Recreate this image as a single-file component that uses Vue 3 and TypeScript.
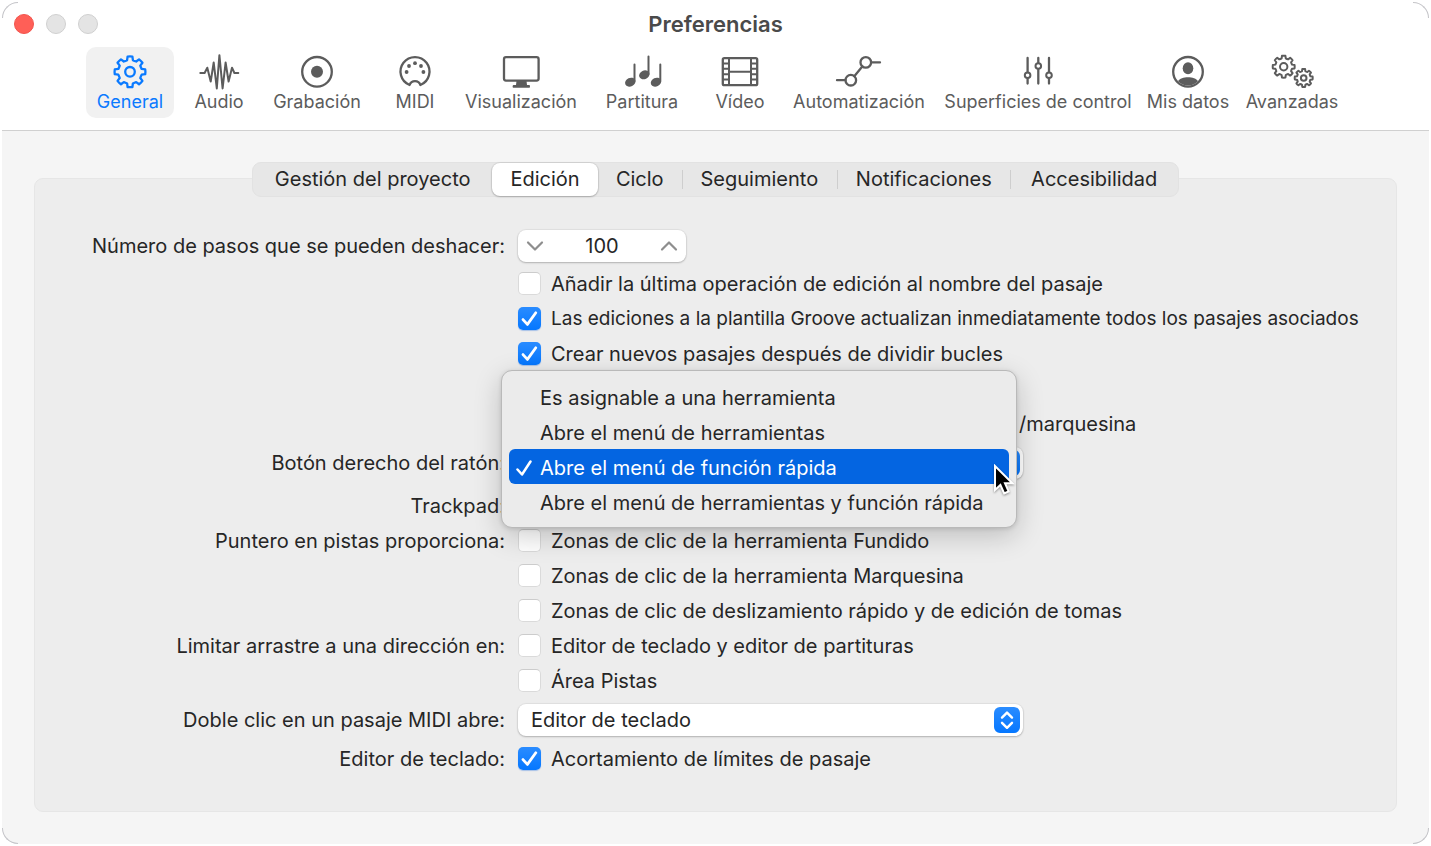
<script setup lang="ts">
import { ref } from 'vue'

interface Section {
  id: string
  label: string
}

const sections: Section[] = [
  { id: 'general', label: 'General' },
  { id: 'audio', label: 'Audio' },
  { id: 'record', label: 'Grabación' },
  { id: 'midi', label: 'MIDI' },
  { id: 'display', label: 'Visualización' },
  { id: 'score', label: 'Partitura' },
  { id: 'video', label: 'Vídeo' },
  { id: 'automation', label: 'Automatización' },
  { id: 'surfaces', label: 'Superficies de control' },
  { id: 'account', label: 'Mis datos' },
  { id: 'advanced', label: 'Avanzadas' },
]

const tabs: string[] = [
  'Gestión del proyecto',
  'Edición',
  'Ciclo',
  'Seguimiento',
  'Notificaciones',
  'Accesibilidad',
]

const menuOptions: string[] = [
  'Es asignable a una herramienta',
  'Abre el menú de herramientas',
  'Abre el menú de función rápida',
  'Abre el menú de herramientas y función rápida',
]

interface Check {
  id: string
  text: string
  label?: string
  long?: boolean
  on: boolean
}

const activeSection = ref('general')
const activeTab = ref('Edición')
const rightButton = ref(menuOptions[2])
const undoSteps = ref(100)
const midiEditor = ref('Editor de teclado')

const editChecks = ref<Check[]>([
  { id: 'append', text: 'Añadir la última operación de edición al nombre del pasaje', on: false },
  { id: 'groove', text: 'Las ediciones a la plantilla Groove actualizan inmediatamente todos los pasajes asociados', long: true, on: true },
  { id: 'split', text: 'Crear nuevos pasajes después de dividir bucles', on: true },
])

const zoneChecks = ref<Check[]>([
  { id: 'fade', label: 'Puntero en pistas proporciona:', text: 'Zonas de clic de la herramienta Fundido', on: false },
  { id: 'marquee', text: 'Zonas de clic de la herramienta Marquesina', on: false },
  { id: 'swipe', text: 'Zonas de clic de deslizamiento rápido y de edición de tomas', on: false },
  { id: 'piano', label: 'Limitar arrastre a una dirección en:', text: 'Editor de teclado y editor de partituras', on: false },
  { id: 'tracks', text: 'Área Pistas', on: false },
])

const trimChecks = ref<Check[]>([
  { id: 'trim', label: 'Editor de teclado:', text: 'Acortamiento de límites de pasaje', on: true },
])

/* Outline of a cog: eight tapered teeth joined by arcs on the inner radius. */
function gear(cx: number, cy: number, outer: number, inner: number): string {
  const teeth = 8
  const at = (r: number, deg: number): string => {
    const a = ((deg - 90) * Math.PI) / 180
    return `${(cx + r * Math.cos(a)).toFixed(2)} ${(cy + r * Math.sin(a)).toFixed(2)}`
  }
  let d = ''
  for (let i = 0; i < teeth; i++) {
    const c = (360 / teeth) * i
    const start = at(inner, c - 14)
    d += i === 0 ? `M${start}` : `Q${at(inner - 0.3, c - 22.5)} ${start}`
    d += `L${at(outer, c - 9)}A${outer} ${outer} 0 0 1 ${at(outer, c + 9)}L${at(inner, c + 14)}`
  }
  return `${d}Q${at(inner - 0.3, -22.5)} ${at(inner, -14)}Z`
}
</script>

<template>
  <main class="window">
    <span class="corner tl"></span><span class="corner tr"></span>
    <span class="corner bl"></span><span class="corner br"></span>

    <header class="chrome">
      <div class="titlebar">
        <div class="lights">
          <button class="light close" type="button" aria-label="Cerrar"></button>
          <button class="light" type="button" aria-label="Minimizar"></button>
          <button class="light" type="button" aria-label="Ampliar"></button>
        </div>
        <h1>Preferencias</h1>
      </div>
      <nav class="toolbar">
        <button
          v-for="s in sections"
          :key="s.id"
          type="button"
          class="tool"
          :class="{ active: s.id === activeSection }"
          @click="activeSection = s.id"
        >
          <svg class="icon" viewBox="0 0 44 36" aria-hidden="true">
            <template v-if="s.id === 'general'">
              <path :d="gear(22, 17.8, 15.4, 12)" />
              <circle cx="22" cy="17.8" r="4.8" />
            </template>
            <path
              v-else-if="s.id === 'audio'"
              class="thin"
              d="M3.3 19H7.6L10.3 13.7L13.7 27.5L16.7 8.5L19.8 34.5L22.4 1.2L25.6 34.5L28.6 8.5L31.6 27.5L35 13.7L37.4 19H41.3"
            />
            <template v-else-if="s.id === 'record'">
              <circle cx="22" cy="17.8" r="14.8" />
              <circle class="solid" cx="22" cy="17.8" r="6" />
            </template>
            <template v-else-if="s.id === 'midi'">
              <path d="M16.6 31A14.5 14.5 0 1 1 27.4 31A5.7 5.7 0 0 0 16.6 31Z" />
              <g class="solid">
                <circle cx="13.6" cy="18" r="1.9" />
                <circle cx="16" cy="12" r="1.9" />
                <circle cx="22" cy="9.2" r="1.9" />
                <circle cx="28" cy="12" r="1.9" />
                <circle cx="30.4" cy="18" r="1.9" />
              </g>
            </template>
            <template v-else-if="s.id === 'display'">
              <rect x="5" y="3.2" width="34.6" height="23.4" rx="2" />
              <path class="solid" d="M17.5 27H27.5L28 31H30.2Q31 31 31 32.4T30.2 33.7H14.4Q13.6 33.7 13.6 32.4T14.4 31H17Z" />
            </template>
            <template v-else-if="s.id === 'score'">
              <g class="solid">
                <ellipse cx="10.3" cy="28.2" rx="5.4" ry="4.3" transform="rotate(-25 10.3 28.2)" />
                <ellipse cx="24.3" cy="20.8" rx="5.4" ry="4.3" transform="rotate(-25 24.3 20.8)" />
                <ellipse cx="36" cy="28.2" rx="5.4" ry="4.3" transform="rotate(-25 36 28.2)" />
              </g>
              <path class="thin" d="M14.5 10.5V27M28.5 2.5V20M40.3 10.5V27" />
            </template>
            <template v-else-if="s.id === 'video'">
              <rect x="4.8" y="4.2" width="34.4" height="27" rx="1.5" />
              <path class="thin" d="M11 4V31M33 4V31M11 17.7H33M5 9.4H11M5 14.8H11M5 20.2H11M5 25.6H11M33 9.4H39M33 14.8H39M33 20.2H39M33 25.6H39" />
            </template>
            <template v-else-if="s.id === 'automation'">
              <circle cx="13.8" cy="26.2" r="5.3" />
              <circle cx="28.8" cy="8.4" r="5.3" />
              <path d="M0 26.2H8.5M17.3 22.2L25.3 12.5M34.1 8.4H43" />
            </template>
            <template v-else-if="s.id === 'surfaces'">
              <path d="M11.6 4V18.2M11.6 24.4V29.5M22.3 4V8.9M22.3 15.1V29.5M33 4V18.2M33 24.4V29.5" />
              <g class="thin">
                <circle cx="11.6" cy="21.3" r="2.8" />
                <circle cx="22.3" cy="12" r="2.8" />
                <circle cx="33" cy="21.3" r="2.8" />
              </g>
            </template>
            <template v-else-if="s.id === 'account'">
              <circle cx="22" cy="17.8" r="14.8" />
              <ellipse class="solid" cx="22" cy="14.3" rx="5.3" ry="6" />
              <path class="solid" d="M12 27.2C15 21.8 29 21.8 32 27.2A14 14 0 0 1 12 27.2Z" />
            </template>
            <g v-else class="thin">
              <path :d="gear(13.7, 12.7, 11, 8.6)" />
              <circle cx="13.7" cy="12.7" r="3.7" />
              <path :d="gear(33.7, 24, 9, 7)" />
              <circle cx="33.7" cy="24" r="2.8" />
            </g>
          </svg>
          <span>{{ s.label }}</span>
        </button>
      </nav>
    </header>

    <div class="body">
      <div class="tabs" role="tablist">
        <button
          v-for="t in tabs"
          :key="t"
          type="button"
          role="tab"
          class="tab"
          :class="{ active: t === activeTab }"
          :aria-selected="t === activeTab"
          @click="activeTab = t"
        >{{ t }}</button>
      </div>

      <form class="panel" @submit.prevent>
        <div class="row stepper-row">
          <label class="name" for="undo">Número de pasos que se pueden deshacer:</label>
          <div class="stepper">
            <button type="button" aria-label="Menos" @click="undoSteps--">
              <svg viewBox="0 0 18 12"><path d="M2 2.5L9 9.5L16 2.5" /></svg>
            </button>
            <input id="undo" v-model="undoSteps" type="text" inputmode="numeric" />
            <button type="button" aria-label="Más" @click="undoSteps++">
              <svg viewBox="0 0 18 12"><path d="M2 9.5L9 2.5L16 9.5" /></svg>
            </button>
          </div>
        </div>

        <div v-for="c in editChecks" :key="c.id" class="row">
          <label class="check" :class="{ long: c.long }">
            <span class="box">
              <input v-model="c.on" type="checkbox" />
              <svg v-if="c.on" viewBox="0 0 23 23"><path d="M5 12.6L9.4 17.4L17.8 5.8" /></svg>
            </span>
            <span>{{ c.text }}</span>
          </label>
        </div>

        <div class="row"></div>
        <div class="row"><span class="tail">/marquesina</span></div>

        <div class="row popup-row">
          <label class="name" for="right-button">Botón derecho del ratón:</label>
          <div class="popup">
            <select id="right-button" v-model="rightButton">
              <option v-for="o in menuOptions" :key="o">{{ o }}</option>
            </select>
            <span class="arrows">
              <svg viewBox="0 0 26 26"><path d="M8 10.6L13 5.6L18 10.6M8 15.8L13 20.8L18 15.8" /></svg>
            </span>
            <div class="menu" role="listbox">
              <button
                v-for="o in menuOptions"
                :key="o"
                type="button"
                role="option"
                class="option"
                :class="{ chosen: o === rightButton }"
                :aria-selected="o === rightButton"
                @click="rightButton = o"
              >
                <svg viewBox="0 0 16 18"><path d="M1.5 10.5L6 15.5L14.5 2.5" /></svg>
                <span>{{ o }}</span>
              </button>
              <svg class="cursor" viewBox="0 0 22 32" aria-hidden="true">
                <path d="M2 2V26L7.4 21L11.2 29.4L15.6 27.4L12 19.2H19.4Z" />
              </svg>
            </div>
          </div>
        </div>

        <div class="row trackpad-row"><span class="name">Trackpad:</span></div>

        <div v-for="c in zoneChecks" :key="c.id" class="row">
          <span v-if="c.label" class="name">{{ c.label }}</span>
          <label class="check">
            <span class="box">
              <input v-model="c.on" type="checkbox" />
              <svg v-if="c.on" viewBox="0 0 23 23"><path d="M5 12.6L9.4 17.4L17.8 5.8" /></svg>
            </span>
            <span>{{ c.text }}</span>
          </label>
        </div>

        <div class="row popup-row">
          <label class="name" for="midi-editor">Doble clic en un pasaje MIDI abre:</label>
          <div class="popup">
            <select id="midi-editor" v-model="midiEditor">
              <option>Editor de teclado</option>
            </select>
            <span class="arrows">
              <svg viewBox="0 0 26 26"><path d="M8 10.6L13 5.6L18 10.6M8 15.8L13 20.8L18 15.8" /></svg>
            </span>
          </div>
        </div>

        <div v-for="c in trimChecks" :key="c.id" class="row">
          <span class="name">{{ c.label }}</span>
          <label class="check">
            <span class="box">
              <input v-model="c.on" type="checkbox" />
              <svg v-if="c.on" viewBox="0 0 23 23"><path d="M5 12.6L9.4 17.4L17.8 5.8" /></svg>
            </span>
            <span>{{ c.text }}</span>
          </label>
        </div>
      </form>
    </div>
  </main>
</template>

<style>
body {
  background: #fff;
}
</style>

<style scoped>
* {
  box-sizing: border-box;
}
.window {
  position: relative;
  margin: 2px 2px 0;
  border-radius: 16px;
  background: #f5f5f5;
  color: #262626;
  font: 400 20px/24px Inter, "Liberation Sans", sans-serif;
}
button,
input,
select {
  margin: 0;
  padding: 0;
  border: 0;
  background: none;
  color: inherit;
  font: inherit;
}
.corner {
  position: absolute;
  width: 16px;
  height: 16px;
  border: 0 solid #c4c4c8;
}
.tl { top: 0; left: 0; border-top-width: 1px; border-left-width: 1px; border-top-left-radius: 16px; }
.tr { top: 0; right: 0; border-top-width: 1px; border-right-width: 1px; border-top-right-radius: 16px; }
.bl { bottom: 0; left: 0; border-bottom-width: 1px; border-left-width: 1px; border-bottom-left-radius: 16px; }
.br { bottom: 0; right: 0; border-bottom-width: 1px; border-right-width: 1px; border-bottom-right-radius: 16px; }

.chrome {
  padding-bottom: 12px;
  border-bottom: 1px solid #d0d0d0;
  border-radius: 16px 16px 0 0;
  background: #fff;
}
.titlebar {
  display: grid;
  grid-template-columns: 1fr auto 1fr;
  align-items: center;
  height: 44px;
  margin-bottom: 1px;
  padding: 0 12px;
}
.lights {
  display: flex;
  gap: 12px;
}
.light {
  width: 20px;
  height: 20px;
  border: 1px solid #d0d0d0;
  border-radius: 50%;
  background: #e4e4e4;
}
.close {
  border-color: #f2544d;
  background: #ff5f57;
}
h1 {
  margin: 0;
  color: #4a4a4a;
  font-size: 22px;
  font-weight: 600;
  line-height: 24px;
}
.toolbar {
  display: grid;
  grid-template-columns: 88fr 90fr 106fr 90fr 122fr 120fr 76fr 162fr 196fr 104fr 104fr;
  padding: 0 85px 0 84px;
}
.tool {
  display: flex;
  flex-direction: column;
  align-items: center;
  min-width: 0;
  padding: 7px 0 4px;
  border-radius: 10px;
  color: #5c5c5c;
  font-size: 18px;
  line-height: 24px;
  white-space: nowrap;
}
.tool.active {
  background: #f1f1f1;
  color: #0a7aff;
}
.icon {
  width: 44px;
  height: 36px;
  overflow: visible;
  fill: none;
  stroke: currentColor;
  stroke-width: 2.3;
  stroke-linecap: round;
  stroke-linejoin: round;
}
.icon .thin {
  stroke-width: 2;
}
.icon .solid {
  fill: currentColor;
  stroke: none;
}

.body {
  padding: 31px 32px 32px;
}
.tabs {
  position: relative;
  display: grid;
  grid-template-columns: 240fr 106fr 84fr 156fr 174fr 168fr;
  width: 68%;
  height: 35px;
  margin: 0 auto -19px;
  border: 1px solid #e2e2e2;
  border-radius: 9px;
  background: #e7e7e7;
}
.tab {
  position: relative;
  min-width: 0;
  padding-bottom: 2px;
  border-radius: 8px;
  white-space: nowrap;
}
.tab.active {
  background: #fff;
  box-shadow: 0 0 1px 1px rgba(0, 0, 0, 0.08), 0 1px 2px rgba(0, 0, 0, 0.2);
}
.tab:nth-child(n + 4)::before {
  content: "";
  position: absolute;
  top: 7px;
  bottom: 7px;
  left: 0;
  width: 1px;
  background: #cecece;
}

.panel {
  padding: 50px 0 35px;
  border: 1px solid #e6e6e6;
  border-radius: 9px;
  background: #ededed;
}
.row {
  display: grid;
  grid-template-columns: minmax(0, 470fr) minmax(0, 878fr);
  column-gap: 13px;
  align-items: center;
  min-height: 35px;
  white-space: nowrap;
}
.row > * {
  grid-column: 2;
  grid-row: 1;
}
.row > .name {
  grid-column: 1;
  justify-self: end;
}
.stepper-row {
  min-height: 34px;
  margin-bottom: 3px;
}
.popup-row {
  min-height: 43px;
}
.trackpad-row {
  margin-top: 4px;
}
.tail {
  margin-left: 501px;
}

.stepper,
.popup select {
  border-radius: 8px;
  background: #fff;
  box-shadow: 0 0 1px 1px rgba(0, 0, 0, 0.05), 0 1px 2px rgba(0, 0, 0, 0.22);
}
.stepper {
  display: flex;
  width: 168px;
  height: 32px;
}
.stepper button {
  display: grid;
  place-items: center;
  width: 34px;
}
.stepper svg {
  width: 18px;
  height: 12px;
  fill: none;
  stroke: #8e8e8e;
  stroke-width: 2.2;
  stroke-linecap: round;
  stroke-linejoin: round;
}
.stepper input {
  flex: 1;
  min-width: 0;
  text-align: center;
}

.check {
  display: flex;
  align-items: center;
  gap: 10px;
}
.check.long {
  font-size: 19px;
}
.box {
  display: grid;
  width: 23px;
  height: 23px;
}
.box > * {
  grid-area: 1 / 1;
}
.box input {
  appearance: none;
  width: 23px;
  height: 23px;
  border: 1px solid #dadada;
  border-top-color: #cccccc;
  border-radius: 5px;
  background: #fff;
}
.box input:checked {
  border: 0;
  background: linear-gradient(#2a8cff, #0577ff);
  box-shadow: 0 1px 1px rgba(0, 90, 220, 0.3);
}
.box svg {
  pointer-events: none;
  fill: none;
  stroke: #fff;
  stroke-width: 2.8;
  stroke-linecap: round;
  stroke-linejoin: round;
}

.popup {
  position: relative;
  display: grid;
  align-items: center;
  width: 505px;
}
.popup select {
  grid-area: 1 / 1;
  appearance: none;
  height: 32px;
  padding: 0 40px 0 13px;
}
.arrows {
  grid-area: 1 / 1;
  justify-self: end;
  width: 26px;
  height: 26px;
  margin-right: 3px;
  border-radius: 6px;
  background: linear-gradient(#2a8cff, #0577ff);
  pointer-events: none;
}
.arrows svg {
  display: block;
  fill: none;
  stroke: #fff;
  stroke-width: 2.4;
  stroke-linecap: round;
  stroke-linejoin: round;
}
.menu {
  position: absolute;
  z-index: 2;
  top: -77px;
  right: 6px;
  left: -17px;
  padding: 8px 7px;
  border: 1px solid #b9b9b9;
  border-radius: 11px;
  background: #ebebeb;
  box-shadow: 0 8px 28px rgba(0, 0, 0, 0.2), 0 1px 4px rgba(0, 0, 0, 0.12);
}
.option {
  display: flex;
  align-items: center;
  gap: 8px;
  width: 100%;
  height: 35px;
  padding: 3px 0 0 7px;
  border-radius: 6px;
  text-align: left;
}
.option svg {
  width: 16px;
  height: 18px;
  visibility: hidden;
  fill: none;
  stroke: currentColor;
  stroke-width: 2.5;
  stroke-linecap: round;
  stroke-linejoin: round;
}
.option.chosen {
  background: #0465e1;
  color: #fff;
}
.option.chosen svg {
  visibility: visible;
}
.menu .cursor {
  position: absolute;
  top: 93px;
  right: 1px;
  width: 22px;
  height: 32px;
  fill: #000;
  stroke: #fff;
  stroke-width: 2;
  filter: drop-shadow(0 1px 1px rgba(0, 0, 0, 0.4));
}
</style>
